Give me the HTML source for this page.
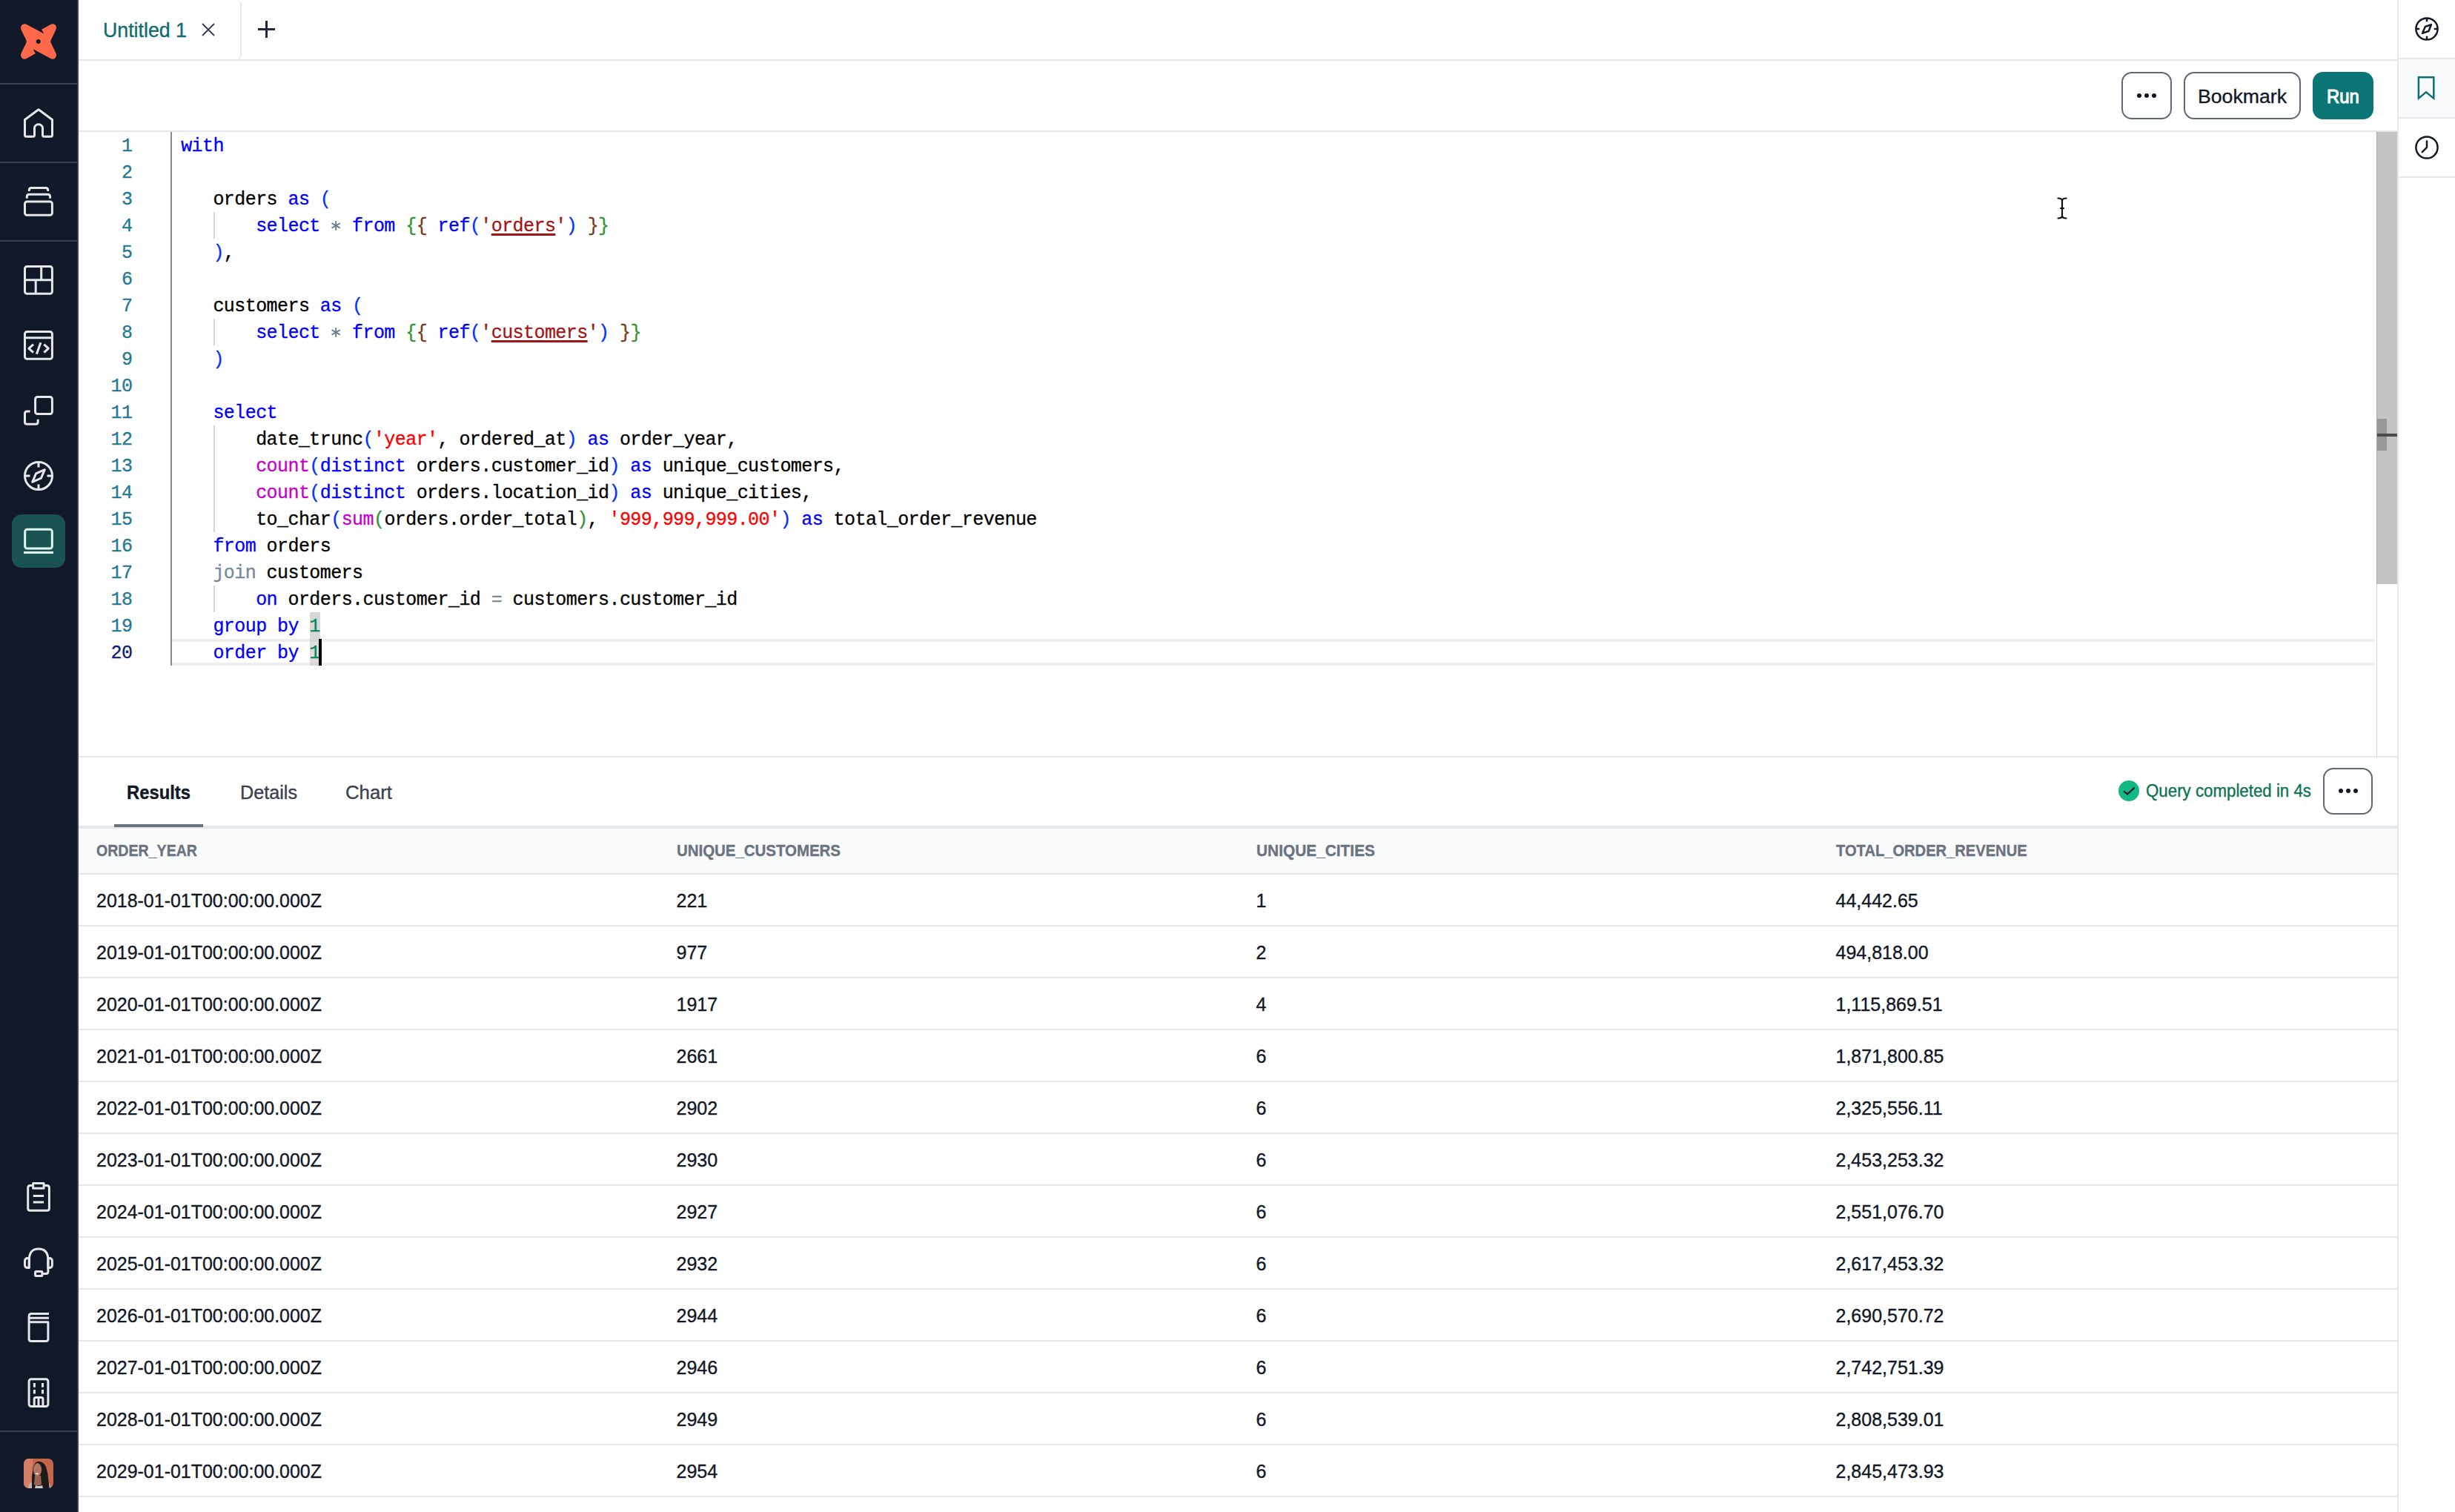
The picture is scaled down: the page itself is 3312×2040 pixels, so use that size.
<!DOCTYPE html><html><head><meta charset="utf-8"><style>
html,body{margin:0;padding:0;width:3312px;height:2040px;overflow:hidden;background:#fff;}
body{position:relative;font-family:"Liberation Sans",sans-serif;}
.t{position:absolute;line-height:0;white-space:nowrap;transform-origin:0 0;-webkit-text-stroke:0.35px currentColor;}
.r{position:absolute;}
.s{position:absolute;overflow:visible;}
.code{position:absolute;left:229.7px;height:36px;line-height:36px;font-family:"Liberation Mono",monospace;font-size:25px;letter-spacing:-0.57px;white-space:pre;color:#000;-webkit-text-stroke:0.3px currentColor;}
.ln{position:absolute;left:106px;width:72.5px;height:36px;line-height:36px;text-align:right;font-family:"Liberation Mono",monospace;font-size:25px;letter-spacing:-0.55px;color:#237893;-webkit-text-stroke:0.3px currentColor;}
.k{color:#0000ff}.o{color:#778899}.s1{color:#ff0000}.p{color:#c700c7}.n{color:#098658}
.b1{color:#0431fa}.b2{color:#319331}.b3{color:#7b3814}
.ref{color:#a31515}.ast{display:inline-block;width:14.43px;height:36px;vertical-align:top;letter-spacing:0}.u{text-decoration:underline;text-decoration-thickness:2.5px;text-underline-offset:3px;}
</style></head><body>

<div class="r" style="left:0.00px;top:0.00px;width:104.00px;height:2040.00px;background:#111827;"></div>
<div class="r" style="left:104.00px;top:0.00px;width:2.00px;height:2040.00px;background:#374151;"></div>
<div class="r" style="left:0.00px;top:112.00px;width:104.00px;height:2.00px;background:#374151;"></div>
<div class="r" style="left:0.00px;top:218.00px;width:104.00px;height:2.00px;background:#374151;"></div>
<div class="r" style="left:0.00px;top:324.00px;width:104.00px;height:2.00px;background:#374151;"></div>
<div class="r" style="left:0.00px;top:1930.00px;width:104.00px;height:2.00px;background:#374151;"></div>
<svg class="s" style="left:28.00px;top:32.00px;" width="48" height="48" viewBox="0 0 48 48"><path fill="#ff694a" d="M8 0.9L31.3 13.6L28.1 7.8L40.4 0.9Q43.8 -0.9 46.4 1.6Q49 4.3 47.3 8.3L40.6 22.2Q40 23.9 40.6 25.6L47.3 39.5Q49 43.5 46.4 46.2Q43.8 48.8 40.4 47.1L16.7 34.3L19.9 40.2L7.6 47.1Q4.2 48.9 1.6 46.3Q-1 43.6 0.7 39.6L7.4 25.7Q8 24 7.4 22.3L0.7 8.4Q-1 4.4 1.6 1.7Q4.2 -0.9 8 0.9Z"/><circle cx="23.7" cy="24" r="3" fill="#111827"/></svg>
<svg class="s" style="left:32.00px;top:146.00px;" width="40" height="40" viewBox="0 0 40 40"><g fill="none" stroke="#e5e7eb" stroke-width="3" stroke-linejoin="round"><path d="M1.5 15.5L20 1.8L38.5 15.5V36.3Q38.5 38.3 36.5 38.3H27.5Q25.5 38.3 25.5 36.3V27.2A5.5 5.5 0 0 0 14.5 27.2V36.3Q14.5 38.3 12.5 38.3H3.5Q1.5 38.3 1.5 36.3Z"/></g></svg>
<svg class="s" style="left:32.00px;top:252.00px;" width="40" height="40" viewBox="0 0 40 40"><g fill="none" stroke="#e5e7eb" stroke-width="3" stroke-linejoin="round"><rect x="1.5" y="20" width="36.9" height="18.3" rx="3"/><path d="M4.3 15.8V13.2Q4.3 10.2 7.3 10.2H32.6Q35.6 10.2 35.6 13.2V15.8"/><path d="M7.3 5.9V4.5Q7.3 1.5 10.3 1.5H29.7Q32.7 1.5 32.7 4.5V5.9"/></g></svg>
<svg class="s" style="left:32.00px;top:358.00px;" width="40" height="40" viewBox="0 0 40 40"><g fill="none" stroke="#e5e7eb" stroke-width="3" stroke-linejoin="round"><rect x="1.5" y="1.5" width="36.9" height="36.8" rx="3"/><path d="M1.5 19.8H38.4M23.7 1.5V19.8M16.2 19.8V38.3"/></g></svg>
<svg class="s" style="left:32.00px;top:446.00px;" width="40" height="40" viewBox="0 0 40 40"><g fill="none" stroke="#e5e7eb" stroke-width="3" stroke-linejoin="round"><rect x="1.5" y="1.5" width="36.9" height="36.8" rx="3"/><path d="M1.5 9.8H38.4M13 18.6L6.9 24.1L13 29.7M27.3 18.6L33.3 24.1L27.3 29.7M22.9 16.2L17.4 31.7"/></g></svg>
<svg class="s" style="left:32.00px;top:534.00px;" width="40" height="40" viewBox="0 0 40 40"><g fill="none" stroke="#e5e7eb" stroke-width="3" stroke-linejoin="round"><rect x="15.6" y="1.5" width="22.8" height="23" rx="3"/><path d="M8.6 21H4.5Q1.5 21 1.5 24V35.3Q1.5 38.3 4.5 38.3H16.2Q19.2 38.3 19.2 35.3V31.7"/></g></svg>
<svg class="s" style="left:32.00px;top:622.00px;" width="40" height="40" viewBox="0 0 40 40"><g fill="none" stroke="#e5e7eb" stroke-width="3" stroke-linejoin="round"><circle cx="20" cy="20" r="18.5"/><path d="M20 1.5V8.5M20 31.5V38.5M1.5 20H8.5M31.5 20H38.5"/><path d="M28.3 11.7L16.6 16.8L11.7 28.3L23.4 23.2Z"/></g></svg>
<div class="r" style="left:16.00px;top:694.00px;width:72.00px;height:72.00px;background:#1a5252;border-radius:13px;"></div>
<svg class="s" style="left:32.00px;top:710.00px;" width="40" height="40" viewBox="0 0 40 40"><g fill="none" stroke="#e0fbf4" stroke-width="3" stroke-linejoin="round"><rect x="1.7" y="4.2" width="36.6" height="25.8" rx="3"/><path d="M0 35.5H40"/></g></svg>
<svg class="s" style="left:32.00px;top:1595.00px;" width="40" height="40" viewBox="0 0 40 40"><g fill="none" stroke="#e5e7eb" stroke-width="3" stroke-linejoin="round"><path d="M12.6 4.5H8.7Q5.7 4.5 5.7 7.5V35.3Q5.7 38.3 8.7 38.3H31.4Q34.4 38.3 34.4 35.3V7.5Q34.4 4.5 31.4 4.5H27.1"/><rect x="12.6" y="1.5" width="14.5" height="6.8"/><path d="M12.8 18.4H27.1M12.8 27.1H27.1"/></g></svg>
<svg class="s" style="left:32.00px;top:1683.00px;" width="40" height="40" viewBox="0 0 40 40"><g fill="none" stroke="#e5e7eb" stroke-width="3" stroke-linejoin="round"><path d="M7.3 27.5V17Q7.3 1.9 20 1.9Q32.9 1.9 32.9 17V32.6Q32.9 35.6 29.9 35.6H24.9"/><path d="M7.3 14.6H5.5Q1.5 14.6 1.5 18.6V23.5Q1.5 27.5 5.5 27.5H7.3Z"/><path d="M32.9 14.6H34.4Q38.4 14.6 38.4 18.6V23.5Q38.4 27.5 34.4 27.5H32.9Z"/><rect x="15.6" y="32.5" width="9.3" height="6.1" rx="1"/></g></svg>
<svg class="s" style="left:32.00px;top:1770.00px;" width="40" height="40" viewBox="0 0 40 40"><g fill="none" stroke="#e5e7eb" stroke-width="3" stroke-linejoin="round"><path d="M34 2.5H10.1Q7.1 2.5 7.1 5.5V36.6Q7.1 39.6 10.1 39.6H29.9Q32.9 39.6 32.9 36.6V13.8H7.1M34 8.25H7.1"/></g></svg>
<svg class="s" style="left:32.00px;top:1858.00px;" width="40" height="40" viewBox="0 0 40 40"><g fill="none" stroke="#e5e7eb" stroke-width="3" stroke-linejoin="round"><rect x="7.1" y="2.7" width="25.8" height="36.9" rx="3"/><path d="M14.4 8V13.8M25.5 8V13.8M14.4 17V22.5M25.5 17V22.5"/><path d="M14.2 39.6V29.5Q14.2 27.5 16.2 27.5H23.9Q25.9 27.5 25.9 29.5V39.6M20 27.5V39.6"/></g></svg>
<svg class="s" style="left:32.00px;top:1968.00px;" width="40" height="40" viewBox="0 0 40 40"><defs><clipPath id="av"><rect x="0" y="0" width="40" height="40" rx="7"/></clipPath></defs><g clip-path="url(#av)"><rect width="40" height="40" fill="#c46649"/><rect width="12" height="40" fill="#d57d66"/><path d="M6 40Q7 32 13 30L27 30Q36 32 37 40Z" fill="#b8b8b8"/><path d="M11 40Q10 26 12.5 12Q15 4 20 3.8Q27 4 30 11Q33 20 33.5 30Q34 36 35 40Z" fill="#1f1a1a"/><path d="M15 23L23 23L24 35Q19 37.5 14 35Z" fill="#9c6453"/><ellipse cx="18.5" cy="15" rx="5.6" ry="9" fill="#b27664"/><ellipse cx="18" cy="20.3" rx="2.4" ry="1.1" fill="#f0d2c8"/><path d="M15 40L16 36Q20 38 25 36L26 40Z" fill="#c8c8c8"/></g></svg>
<div class="r" style="left:106.00px;top:80.00px;width:3128.00px;height:2.00px;background:#e5e7eb;"></div>
<div class="r" style="left:300px;top:-2px;width:24px;height:84px;border-right:2px solid #e5e7eb;border-radius:0 9px 9px 0;"></div>
<div class="r" style="left:300.00px;top:-2.00px;width:26.00px;height:3.00px;background:#fff;"></div>
<div class="t" style="left:139.40px;top:40.64px;font-size:27.00px;color:#0f6b70;transform:scaleX(0.9906);">Untitled 1</div>
<svg class="s" style="left:272.00px;top:31.00px;" width="18" height="18" viewBox="0 0 18 18"><path d="M1 1L17 17M17 1L1 17" stroke="#374151" stroke-width="2" fill="none"/></svg>
<svg class="s" style="left:347.50px;top:28.40px;" width="23" height="23" viewBox="0 0 23 23"><path d="M11.5 0V23M0 11.5H23" stroke="#1f2937" stroke-width="3" fill="none"/></svg>
<div class="r" style="left:3234.00px;top:0.00px;width:2.00px;height:2040.00px;background:#e5e7eb;"></div>
<div class="r" style="left:3236.00px;top:80.00px;width:76.00px;height:78.00px;background:#f9fafb;"></div>
<div class="r" style="left:3236.00px;top:78.00px;width:76.00px;height:2.00px;background:#e5e7eb;"></div>
<div class="r" style="left:3236.00px;top:158.00px;width:76.00px;height:2.00px;background:#e5e7eb;"></div>
<div class="r" style="left:3236.00px;top:238.00px;width:76.00px;height:2.00px;background:#e5e7eb;"></div>
<svg class="s" style="left:3258.00px;top:23.00px;" width="32" height="32" viewBox="0 0 32 32"><g fill="none" stroke="#111827" stroke-width="2.5" stroke-linejoin="round"><circle cx="16" cy="16" r="14.6"/><path d="M16 1.4V6.2M16 25.8V30.6M1.4 16H6.2M25.8 16H30.6"/><path d="M21.9 10.2L13.8 13L10 21.9L18.5 19Z"/></g></svg>
<svg class="s" style="left:3258.00px;top:103.00px;" width="32" height="32" viewBox="0 0 32 32"><path d="M4.9 1.3H25.3V29.6L15 21.3L4.9 29.6Z" fill="none" stroke="#0c7073" stroke-width="2.5" stroke-linejoin="miter" stroke-miterlimit="3"/></svg>
<svg class="s" style="left:3258.00px;top:183.00px;" width="32" height="32" viewBox="0 0 32 32"><g fill="none" stroke="#111827" stroke-width="2.5" stroke-linejoin="round" stroke-linecap="round"><circle cx="16" cy="16" r="14.6"/><path d="M16 7.4V15.8L9.8 22.1"/></g></svg>
<div class="r" style="left:106.00px;top:176.00px;width:3128.00px;height:2.00px;background:#e5e7eb;"></div>
<div class="r" style="left:2862px;top:97px;width:64px;height:60px;border:2px solid #5f6877;border-radius:14px;"></div>
<div class="r" style="left:2883px;top:126px;width:6px;height:6px;border-radius:3px;background:#111827;"></div>
<div class="r" style="left:2893px;top:126px;width:6px;height:6px;border-radius:3px;background:#111827;"></div>
<div class="r" style="left:2903px;top:126px;width:6px;height:6px;border-radius:3px;background:#111827;"></div>
<div class="r" style="left:2946px;top:97px;width:154px;height:60px;border:2px solid #5f6877;border-radius:14px;"></div>
<div class="t" style="left:2965.00px;top:129.69px;font-size:26.00px;color:#111827;transform:scaleX(1.0253);">Bookmark</div>
<div class="r" style="left:3120.00px;top:97.00px;width:82.00px;height:64.00px;background:#0b7474;border-radius:14px;"></div>
<div class="t" style="left:3139.00px;top:129.69px;font-size:26.00px;color:#ffffff;transform:scaleX(0.9162);-webkit-text-stroke:1.1px #fff;">Run</div>
<div class="r" style="left:3206.00px;top:178.00px;width:1.00px;height:842.00px;background:#d4d4d4;"></div>
<div class="r" style="left:3206.00px;top:178.00px;width:1.00px;height:610.00px;background:#a9a9a9;"></div>
<div class="r" style="left:3207.00px;top:178.00px;width:27.00px;height:610.00px;background:#c4c4c4;"></div>
<div class="r" style="left:3207.00px;top:565.00px;width:13.00px;height:43.00px;background:#97989a;"></div>
<div class="r" style="left:3207.00px;top:585.00px;width:27.00px;height:4.00px;background:#4b4b4d;"></div>
<div class="r" style="left:230.00px;top:178.00px;width:2.00px;height:720.00px;background:#8a8a8a;"></div>
<div class="r" style="left:232px;top:862px;width:2972px;height:28px;border-top:4px solid #eeeeee;border-bottom:4px solid #eeeeee;"></div>
<div class="r" style="left:418.00px;top:826.00px;width:14.00px;height:36.00px;background:#d8d8d8;"></div>
<div class="r" style="left:418.00px;top:862.00px;width:14.00px;height:36.00px;background:rgba(200,200,200,0.6);"></div>
<div class="r" style="left:288.00px;top:286.00px;width:2.00px;height:36.00px;background:#d3d3d3;"></div>
<div class="r" style="left:288.00px;top:430.00px;width:2.00px;height:36.00px;background:#d3d3d3;"></div>
<div class="r" style="left:288.00px;top:574.00px;width:2.00px;height:36.00px;background:#d3d3d3;"></div>
<div class="r" style="left:288.00px;top:610.00px;width:2.00px;height:36.00px;background:#d3d3d3;"></div>
<div class="r" style="left:288.00px;top:646.00px;width:2.00px;height:36.00px;background:#d3d3d3;"></div>
<div class="r" style="left:288.00px;top:682.00px;width:2.00px;height:36.00px;background:#d3d3d3;"></div>
<div class="r" style="left:288.00px;top:790.00px;width:2.00px;height:36.00px;background:#d3d3d3;"></div>
<div class="ln" style="top:179.70px;">1</div>
<div class="code" style="top:180.10px"> <span class="k">with</span></div>
<div class="ln" style="top:215.70px;">2</div>
<div class="code" style="top:216.10px"></div>
<div class="ln" style="top:251.70px;">3</div>
<div class="code" style="top:252.10px">    orders <span class="k">as</span> <span class="b1">(</span></div>
<div class="ln" style="top:287.70px;">4</div>
<div class="code" style="top:288.10px">        <span class="k">select</span> <span class="ast"><svg width="14.43" height="36" viewBox="-7.215 -16.4 14.43 36" style="display:block"><path d="M0 -6.5V6.5M-5.6 -3.25L5.6 3.25M-5.6 3.25L5.6 -3.25" stroke="#6f7d8f" stroke-width="1.8" fill="none"/></svg></span> <span class="k">from</span> <span class="b2">{</span><span class="b3">{</span> <span class="k">ref</span><span class="b1">(</span><span class="ref">'<span class="u">orders</span>'</span><span class="b1">)</span> <span class="b3">}</span><span class="b2">}</span></div>
<div class="ln" style="top:323.70px;">5</div>
<div class="code" style="top:324.10px">    <span class="b1">)</span>,</div>
<div class="ln" style="top:359.70px;">6</div>
<div class="code" style="top:360.10px"></div>
<div class="ln" style="top:395.70px;">7</div>
<div class="code" style="top:396.10px">    customers <span class="k">as</span> <span class="b1">(</span></div>
<div class="ln" style="top:431.70px;">8</div>
<div class="code" style="top:432.10px">        <span class="k">select</span> <span class="ast"><svg width="14.43" height="36" viewBox="-7.215 -16.4 14.43 36" style="display:block"><path d="M0 -6.5V6.5M-5.6 -3.25L5.6 3.25M-5.6 3.25L5.6 -3.25" stroke="#6f7d8f" stroke-width="1.8" fill="none"/></svg></span> <span class="k">from</span> <span class="b2">{</span><span class="b3">{</span> <span class="k">ref</span><span class="b1">(</span><span class="ref">'<span class="u">customers</span>'</span><span class="b1">)</span> <span class="b3">}</span><span class="b2">}</span></div>
<div class="ln" style="top:467.70px;">9</div>
<div class="code" style="top:468.10px">    <span class="b1">)</span></div>
<div class="ln" style="top:503.70px;">10</div>
<div class="code" style="top:504.10px"></div>
<div class="ln" style="top:539.70px;">11</div>
<div class="code" style="top:540.10px">    <span class="k">select</span></div>
<div class="ln" style="top:575.70px;">12</div>
<div class="code" style="top:576.10px">        date_trunc<span class="b1">(</span><span class="s1">'year'</span>, ordered_at<span class="b1">)</span> <span class="k">as</span> order_year,</div>
<div class="ln" style="top:611.70px;">13</div>
<div class="code" style="top:612.10px">        <span class="p">count</span><span class="b1">(</span><span class="k">distinct</span> orders.customer_id<span class="b1">)</span> <span class="k">as</span> unique_customers,</div>
<div class="ln" style="top:647.70px;">14</div>
<div class="code" style="top:648.10px">        <span class="p">count</span><span class="b1">(</span><span class="k">distinct</span> orders.location_id<span class="b1">)</span> <span class="k">as</span> unique_cities,</div>
<div class="ln" style="top:683.70px;">15</div>
<div class="code" style="top:684.10px">        to_char<span class="b1">(</span><span class="p">sum</span><span class="b2">(</span>orders.order_total<span class="b2">)</span>, <span class="s1">'999,999,999.00'</span><span class="b1">)</span> <span class="k">as</span> total_order_revenue</div>
<div class="ln" style="top:719.70px;">16</div>
<div class="code" style="top:720.10px">    <span class="k">from</span> orders</div>
<div class="ln" style="top:755.70px;">17</div>
<div class="code" style="top:756.10px">    <span class="o">join</span> customers</div>
<div class="ln" style="top:791.70px;">18</div>
<div class="code" style="top:792.10px">        <span class="k">on</span> orders.customer_id <span class="o">=</span> customers.customer_id</div>
<div class="ln" style="top:827.70px;">19</div>
<div class="code" style="top:828.10px">    <span class="k">group</span> <span class="k">by</span> <span class="n">1</span></div>
<div class="ln" style="top:863.70px;color:#0b216f;">20</div>
<div class="code" style="top:864.10px">    <span class="k">order</span> <span class="k">by</span> <span class="n">1</span></div>
<div class="r" style="left:430.00px;top:862.00px;width:4.00px;height:36.00px;background:#000000;"></div>
<svg class="s" style="left:2775.00px;top:266.00px;" width="14" height="30" viewBox="0 0 14 30"><g fill="none" stroke="#111" stroke-width="2.2" stroke-linecap="round"><path d="M1.5 1.5Q7 1.5 7 5V25Q7 28.5 12.5 28.5M12.5 1.5Q7 1.5 7 5M7 25Q7 28.5 1.5 28.5M5 15H9"/></g></svg>
<div class="r" style="left:106.00px;top:1020.00px;width:3128.00px;height:2.00px;background:#e5e7eb;"></div>
<div class="t" style="left:171.00px;top:1068.99px;font-size:26.00px;color:#111827;font-weight:700;transform:scaleX(0.9156);">Results</div>
<div class="t" style="left:323.50px;top:1068.99px;font-size:26.00px;color:#374151;transform:scaleX(0.9689);">Details</div>
<div class="t" style="left:466.00px;top:1068.99px;font-size:26.00px;color:#374151;transform:scaleX(0.9909);">Chart</div>
<div class="r" style="left:106.00px;top:1114.00px;width:3128.00px;height:4.00px;background:#e5e7eb;"></div>
<div class="r" style="left:154.00px;top:1112.00px;width:120.00px;height:4.00px;background:#6b7280;"></div>
<svg class="s" style="left:2858.00px;top:1053.00px;" width="28" height="28" viewBox="0 0 28 28"><circle cx="14" cy="14" r="14" fill="#12b886"/><path d="M7.8 15L12 18.3L21 10.3" fill="none" stroke="#1c1c34" stroke-width="2.3" stroke-linecap="round" stroke-linejoin="round"/></svg>
<div class="t" style="left:2894.50px;top:1067.03px;font-size:23.00px;color:#0b7352;transform:scaleX(0.9691);">Query completed in 4s</div>
<div class="r" style="left:3134px;top:1035.5px;width:63px;height:59px;border:2px solid #5f6877;border-radius:14px;"></div>
<div class="r" style="left:3154.5px;top:1064px;width:6px;height:6px;border-radius:3px;background:#111827;"></div>
<div class="r" style="left:3164.5px;top:1064px;width:6px;height:6px;border-radius:3px;background:#111827;"></div>
<div class="r" style="left:3174.5px;top:1064px;width:6px;height:6px;border-radius:3px;background:#111827;"></div>
<div class="r" style="left:106.00px;top:1118.00px;width:3128.00px;height:60.00px;background:#f9fafb;"></div>
<div class="r" style="left:106.00px;top:1178.00px;width:3128.00px;height:2.00px;background:#e5e7eb;"></div>
<div class="t" style="left:130.40px;top:1148.38px;font-size:22.00px;color:#6b7280;font-weight:700;transform:scaleX(0.8900);">ORDER_YEAR</div>
<div class="t" style="left:912.50px;top:1148.38px;font-size:22.00px;color:#6b7280;font-weight:700;transform:scaleX(0.9287);">UNIQUE_CUSTOMERS</div>
<div class="t" style="left:1694.60px;top:1148.38px;font-size:22.00px;color:#6b7280;font-weight:700;transform:scaleX(0.9484);">UNIQUE_CITIES</div>
<div class="t" style="left:2476.50px;top:1148.38px;font-size:22.00px;color:#6b7280;font-weight:700;transform:scaleX(0.9149);">TOTAL_ORDER_REVENUE</div>
<div class="t" style="left:130.40px;top:1215.34px;font-size:25.00px;color:#111827;transform:scaleX(0.9987);">2018-01-01T00:00:00.000Z</div>
<div class="t" style="left:912.50px;top:1215.34px;font-size:25.00px;color:#111827;">221</div>
<div class="t" style="left:1694.60px;top:1215.34px;font-size:25.00px;color:#111827;">1</div>
<div class="t" style="left:2476.50px;top:1215.34px;font-size:25.00px;color:#111827;">44,442.65</div>
<div class="r" style="left:106.00px;top:1248.00px;width:3128.00px;height:2.00px;background:#e5e7eb;"></div>
<div class="t" style="left:130.40px;top:1285.34px;font-size:25.00px;color:#111827;transform:scaleX(0.9987);">2019-01-01T00:00:00.000Z</div>
<div class="t" style="left:912.50px;top:1285.34px;font-size:25.00px;color:#111827;">977</div>
<div class="t" style="left:1694.60px;top:1285.34px;font-size:25.00px;color:#111827;">2</div>
<div class="t" style="left:2476.50px;top:1285.34px;font-size:25.00px;color:#111827;">494,818.00</div>
<div class="r" style="left:106.00px;top:1318.00px;width:3128.00px;height:2.00px;background:#e5e7eb;"></div>
<div class="t" style="left:130.40px;top:1355.34px;font-size:25.00px;color:#111827;transform:scaleX(0.9987);">2020-01-01T00:00:00.000Z</div>
<div class="t" style="left:912.50px;top:1355.34px;font-size:25.00px;color:#111827;">1917</div>
<div class="t" style="left:1694.60px;top:1355.34px;font-size:25.00px;color:#111827;">4</div>
<div class="t" style="left:2476.50px;top:1355.34px;font-size:25.00px;color:#111827;">1,115,869.51</div>
<div class="r" style="left:106.00px;top:1388.00px;width:3128.00px;height:2.00px;background:#e5e7eb;"></div>
<div class="t" style="left:130.40px;top:1425.34px;font-size:25.00px;color:#111827;transform:scaleX(0.9987);">2021-01-01T00:00:00.000Z</div>
<div class="t" style="left:912.50px;top:1425.34px;font-size:25.00px;color:#111827;">2661</div>
<div class="t" style="left:1694.60px;top:1425.34px;font-size:25.00px;color:#111827;">6</div>
<div class="t" style="left:2476.50px;top:1425.34px;font-size:25.00px;color:#111827;">1,871,800.85</div>
<div class="r" style="left:106.00px;top:1458.00px;width:3128.00px;height:2.00px;background:#e5e7eb;"></div>
<div class="t" style="left:130.40px;top:1495.34px;font-size:25.00px;color:#111827;transform:scaleX(0.9987);">2022-01-01T00:00:00.000Z</div>
<div class="t" style="left:912.50px;top:1495.34px;font-size:25.00px;color:#111827;">2902</div>
<div class="t" style="left:1694.60px;top:1495.34px;font-size:25.00px;color:#111827;">6</div>
<div class="t" style="left:2476.50px;top:1495.34px;font-size:25.00px;color:#111827;">2,325,556.11</div>
<div class="r" style="left:106.00px;top:1528.00px;width:3128.00px;height:2.00px;background:#e5e7eb;"></div>
<div class="t" style="left:130.40px;top:1565.34px;font-size:25.00px;color:#111827;transform:scaleX(0.9987);">2023-01-01T00:00:00.000Z</div>
<div class="t" style="left:912.50px;top:1565.34px;font-size:25.00px;color:#111827;">2930</div>
<div class="t" style="left:1694.60px;top:1565.34px;font-size:25.00px;color:#111827;">6</div>
<div class="t" style="left:2476.50px;top:1565.34px;font-size:25.00px;color:#111827;">2,453,253.32</div>
<div class="r" style="left:106.00px;top:1598.00px;width:3128.00px;height:2.00px;background:#e5e7eb;"></div>
<div class="t" style="left:130.40px;top:1635.34px;font-size:25.00px;color:#111827;transform:scaleX(0.9987);">2024-01-01T00:00:00.000Z</div>
<div class="t" style="left:912.50px;top:1635.34px;font-size:25.00px;color:#111827;">2927</div>
<div class="t" style="left:1694.60px;top:1635.34px;font-size:25.00px;color:#111827;">6</div>
<div class="t" style="left:2476.50px;top:1635.34px;font-size:25.00px;color:#111827;">2,551,076.70</div>
<div class="r" style="left:106.00px;top:1668.00px;width:3128.00px;height:2.00px;background:#e5e7eb;"></div>
<div class="t" style="left:130.40px;top:1705.34px;font-size:25.00px;color:#111827;transform:scaleX(0.9987);">2025-01-01T00:00:00.000Z</div>
<div class="t" style="left:912.50px;top:1705.34px;font-size:25.00px;color:#111827;">2932</div>
<div class="t" style="left:1694.60px;top:1705.34px;font-size:25.00px;color:#111827;">6</div>
<div class="t" style="left:2476.50px;top:1705.34px;font-size:25.00px;color:#111827;">2,617,453.32</div>
<div class="r" style="left:106.00px;top:1738.00px;width:3128.00px;height:2.00px;background:#e5e7eb;"></div>
<div class="t" style="left:130.40px;top:1775.34px;font-size:25.00px;color:#111827;transform:scaleX(0.9987);">2026-01-01T00:00:00.000Z</div>
<div class="t" style="left:912.50px;top:1775.34px;font-size:25.00px;color:#111827;">2944</div>
<div class="t" style="left:1694.60px;top:1775.34px;font-size:25.00px;color:#111827;">6</div>
<div class="t" style="left:2476.50px;top:1775.34px;font-size:25.00px;color:#111827;">2,690,570.72</div>
<div class="r" style="left:106.00px;top:1808.00px;width:3128.00px;height:2.00px;background:#e5e7eb;"></div>
<div class="t" style="left:130.40px;top:1845.34px;font-size:25.00px;color:#111827;transform:scaleX(0.9987);">2027-01-01T00:00:00.000Z</div>
<div class="t" style="left:912.50px;top:1845.34px;font-size:25.00px;color:#111827;">2946</div>
<div class="t" style="left:1694.60px;top:1845.34px;font-size:25.00px;color:#111827;">6</div>
<div class="t" style="left:2476.50px;top:1845.34px;font-size:25.00px;color:#111827;">2,742,751.39</div>
<div class="r" style="left:106.00px;top:1878.00px;width:3128.00px;height:2.00px;background:#e5e7eb;"></div>
<div class="t" style="left:130.40px;top:1915.34px;font-size:25.00px;color:#111827;transform:scaleX(0.9987);">2028-01-01T00:00:00.000Z</div>
<div class="t" style="left:912.50px;top:1915.34px;font-size:25.00px;color:#111827;">2949</div>
<div class="t" style="left:1694.60px;top:1915.34px;font-size:25.00px;color:#111827;">6</div>
<div class="t" style="left:2476.50px;top:1915.34px;font-size:25.00px;color:#111827;">2,808,539.01</div>
<div class="r" style="left:106.00px;top:1948.00px;width:3128.00px;height:2.00px;background:#e5e7eb;"></div>
<div class="t" style="left:130.40px;top:1985.34px;font-size:25.00px;color:#111827;transform:scaleX(0.9987);">2029-01-01T00:00:00.000Z</div>
<div class="t" style="left:912.50px;top:1985.34px;font-size:25.00px;color:#111827;">2954</div>
<div class="t" style="left:1694.60px;top:1985.34px;font-size:25.00px;color:#111827;">6</div>
<div class="t" style="left:2476.50px;top:1985.34px;font-size:25.00px;color:#111827;">2,845,473.93</div>
<div class="r" style="left:106.00px;top:2018.00px;width:3128.00px;height:2.00px;background:#e5e7eb;"></div>
</body></html>
